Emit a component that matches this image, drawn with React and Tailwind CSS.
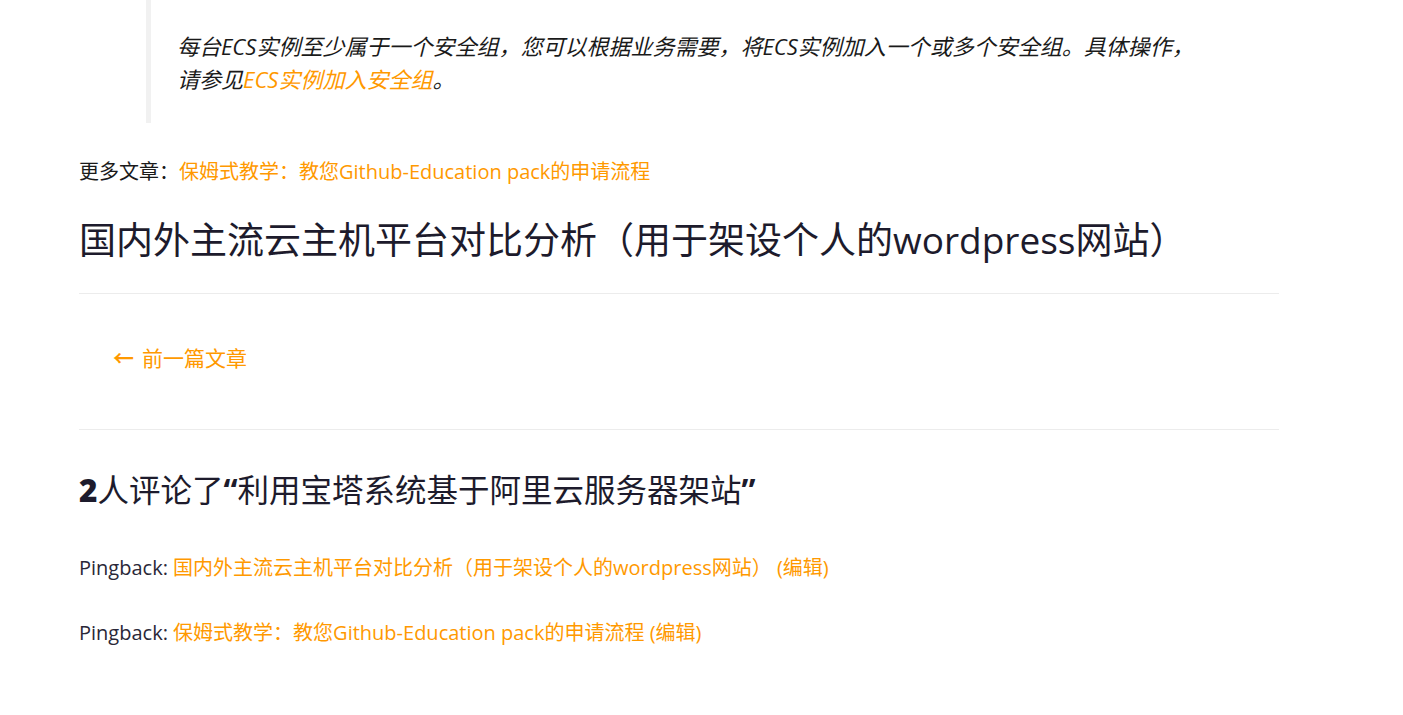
import React from 'react';

const font = { fontFamily: '"Open Sans", "Noto Sans CJK SC", sans-serif' };

const Pingback = ({ title }) => (
  <p className="text-[20px] leading-[30px] text-[#2a2838]">
    Pingback: <a href="#" className="text-[#ff9900]">{title}</a>{' '}
    <a href="#" className="text-[#ff9900]">(编辑)</a>
  </p>
);

const App = () => {
  return (
    <div className="min-h-screen bg-white text-[#1d1b2c]" style={font}>
      <div className="w-[1200px] ml-[79px]">
        <blockquote className="ml-[67px] border-l-[5px] border-[#f1f1f1] pl-[26px] pr-[72px] pt-[30px] pb-[27px]">
          <p className="text-[22px] leading-[33px] italic text-[#1a1a1a]">
            每台ECS实例至少属于一个安全组，您可以根据业务需要，将ECS实例加入一个或多个安全组。具体操作，请参见
            <a href="#" className="text-[#ff9900]">ECS实例加入安全组</a>。
          </p>
        </blockquote>

        <p className="mt-[34px] text-[20px] leading-[30px] text-[#1a1a1a]">
          更多文章：<a href="#" className="text-[#ff9900]">保姆式教学：教您Github-Education pack的申请流程</a>
        </p>

        <h2 className="mt-[30px] text-[37px] leading-[46px] font-normal text-[#1d1b2c]">
          国内外主流云主机平台对比分析（用于架设个人的wordpress网站）
        </h2>

        <div className="mt-[30px] border-t border-[#ececec]" />

        <nav className="pt-[49px] pb-[50px] pl-[34px]">
          <a href="#" className="flex items-center gap-[8px] text-[21px] leading-[30px] text-[#ff9900]">
            <span className="font-bold">←</span>
            <span>前一篇文章</span>
          </a>
        </nav>

        <div className="mt-[6px] border-t border-[#ececec]" />

        <h3 className="mt-[41px] text-[31.5px] leading-[38px] font-normal text-[#1d1b2c]">
          <span className="font-extrabold">2</span>人评论了<span className="font-bold">“</span>利用宝塔系统基于阿里云服务器架站<span className="font-bold">”</span>
        </h3>

        <div className="mt-[44px] flex flex-col gap-[35px]">
          <Pingback title="国内外主流云主机平台对比分析（用于架设个人的wordpress网站）" />
          <Pingback title="保姆式教学：教您Github-Education pack的申请流程" />
        </div>
      </div>
    </div>
  );
};

export default App;
